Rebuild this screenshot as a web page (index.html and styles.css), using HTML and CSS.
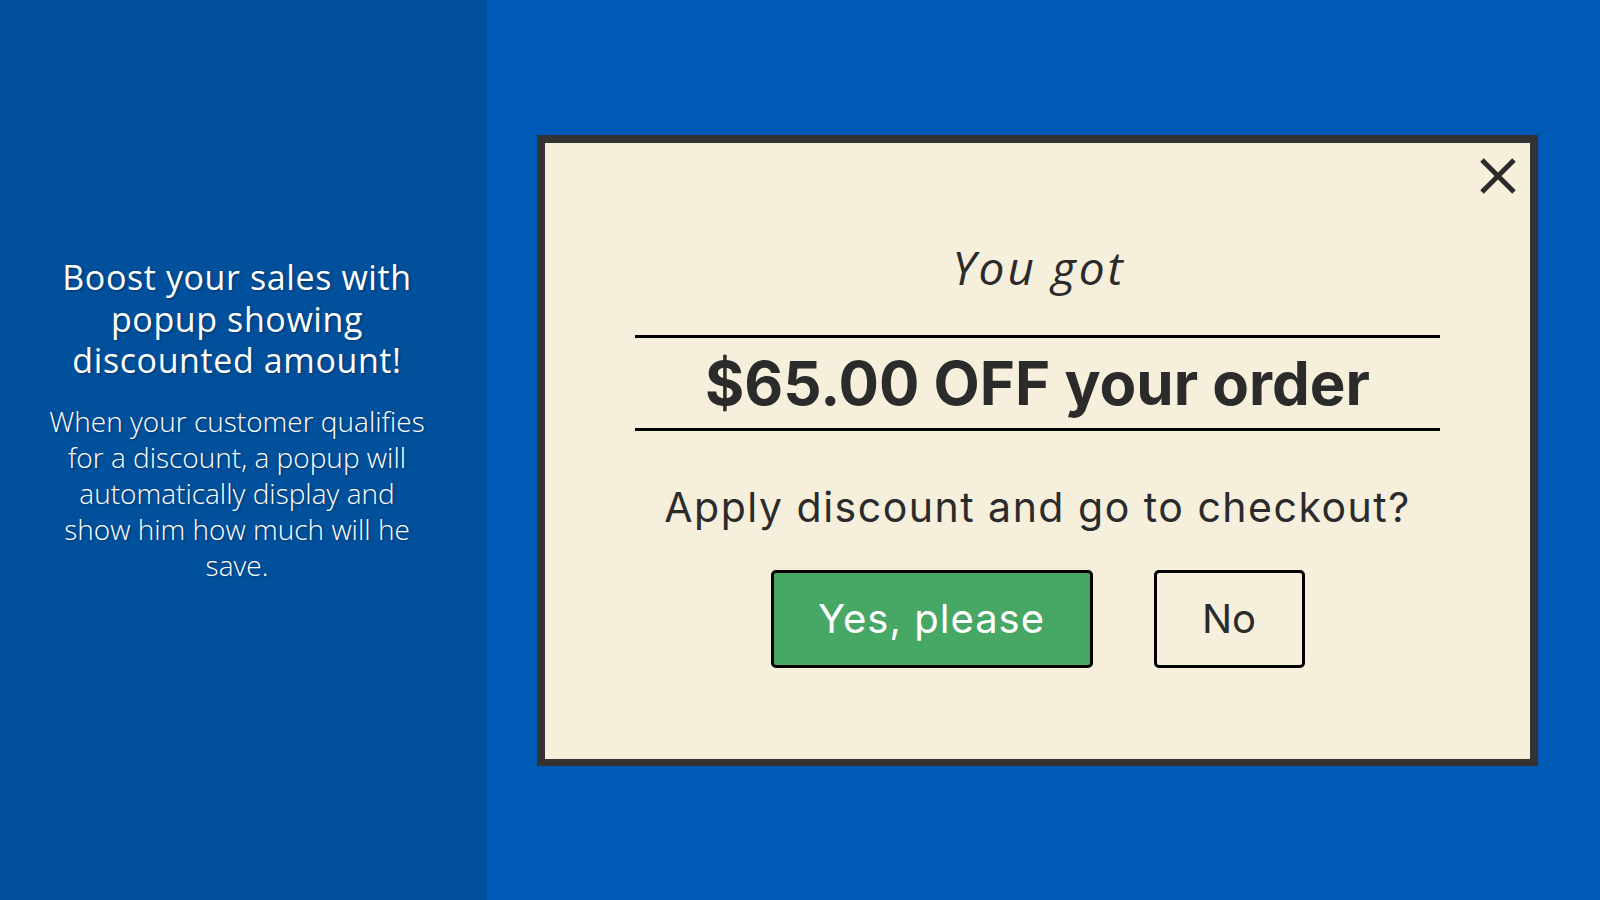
FILE: index.html
```html
<!DOCTYPE html>
<html lang="en">
<head>
<meta charset="utf-8">
<title>Discount popup</title>
<link rel="stylesheet" href="styles.css">
</head>
<body>
<div class="page">
  <aside class="intro">
    <h1 class="intro-title">Boost your sales with<br>popup showing<br>discounted amount!</h1>
    <p class="intro-text">When your customer qualifies<br>for a discount, a popup will<br>automatically display and<br>show him how much will he<br>save.</p>
  </aside>
  <main class="stage">
    <div class="popup">
      <button class="popup-close" aria-label="Close">
        <svg viewBox="0 0 38 38" width="38" height="38"><path d="M3 3 L35 35 M35 3 L3 35" stroke="#2b2b2b" stroke-width="5" fill="none"/></svg>
      </button>
      <p class="popup-lead">You got</p>
      <div class="popup-amount">$65.00 OFF your order</div>
      <p class="popup-question">Apply discount and go to checkout?</p>
      <div class="popup-actions">
        <button class="btn btn-yes">Yes, please</button>
        <button class="btn btn-no">No</button>
      </div>
    </div>
  </main>
</div>
</body>
</html>
```
FILE: styles.css
```css
* { box-sizing: border-box; }
html, body { margin: 0; padding: 0; }
body {
  width: 1600px;
  height: 900px;
  overflow: hidden;
  background: #0059b4;
}
.page {
  display: flex;
  height: 900px;
}
.intro {
  width: 487px;
  flex: none;
  background: #00509c;
  display: flex;
  flex-direction: column;
  justify-content: center;
  align-items: center;
  padding-right: 13px;
  padding-bottom: 60px;
  color: #fff;
  text-align: center;
  font-family: "Open Sans", "Lato", sans-serif;
  text-shadow: 1px 1px 3px rgba(0, 0, 0, 0.35);
}
.intro-title {
  margin: 0;
  font-size: 34px;
  line-height: 41.5px;
  font-weight: 400;
  letter-spacing: 0.6px;
}
.intro-text {
  margin: 21px 0 0;
  font-size: 28px;
  line-height: 36px;
  font-weight: 300;
}
.stage {
  flex: 1;
  display: flex;
  align-items: center;
  padding-left: 50px;
}
.popup {
  position: relative;
  width: 1001px;
  background: #f6efdc;
  border: 8px solid #333;
  border-bottom-width: 7px;
  padding: 93px 90px 91px;
  color: #2b2b2b;
  text-align: center;
}
.popup-close {
  position: absolute;
  top: 14px;
  right: 13px;
  width: 38px;
  height: 38px;
  padding: 0;
  border: 0;
  background: none;
  display: block;
}
.popup-close svg { display: block; }
.popup-lead {
  margin: 0;
  font-family: "Open Sans", sans-serif;
  font-style: italic;
  font-size: 46px;
  line-height: 62px;
  letter-spacing: 3px;
  text-indent: 3px;
}
.popup-amount {
  margin-top: 37px;
  border-top: 3px solid #000;
  border-bottom: 3px solid #000;
  font-family: "Inter", sans-serif;
  font-weight: 700;
  font-size: 60px;
  line-height: 90px;
}
.popup-question {
  margin: 51px 0 0;
  font-family: "Inter", sans-serif;
  font-size: 41px;
  line-height: 50px;
  letter-spacing: 1.5px;
}
.popup-actions {
  margin-top: 38px;
  display: flex;
  justify-content: center;
  gap: 61px;
}
.btn {
  height: 98px;
  border: 3px solid #000;
  border-radius: 5px;
  font-family: "Inter", sans-serif;
  font-size: 40px;
  line-height: 1;
  display: flex;
  align-items: center;
  justify-content: center;
  padding: 0;
}
.btn-yes {
  width: 322px;
  background: #47a764;
  color: #fff;
  letter-spacing: 1px;
}
.btn-no {
  width: 151px;
  background: transparent;
  color: #2b2b2b;
}
```
